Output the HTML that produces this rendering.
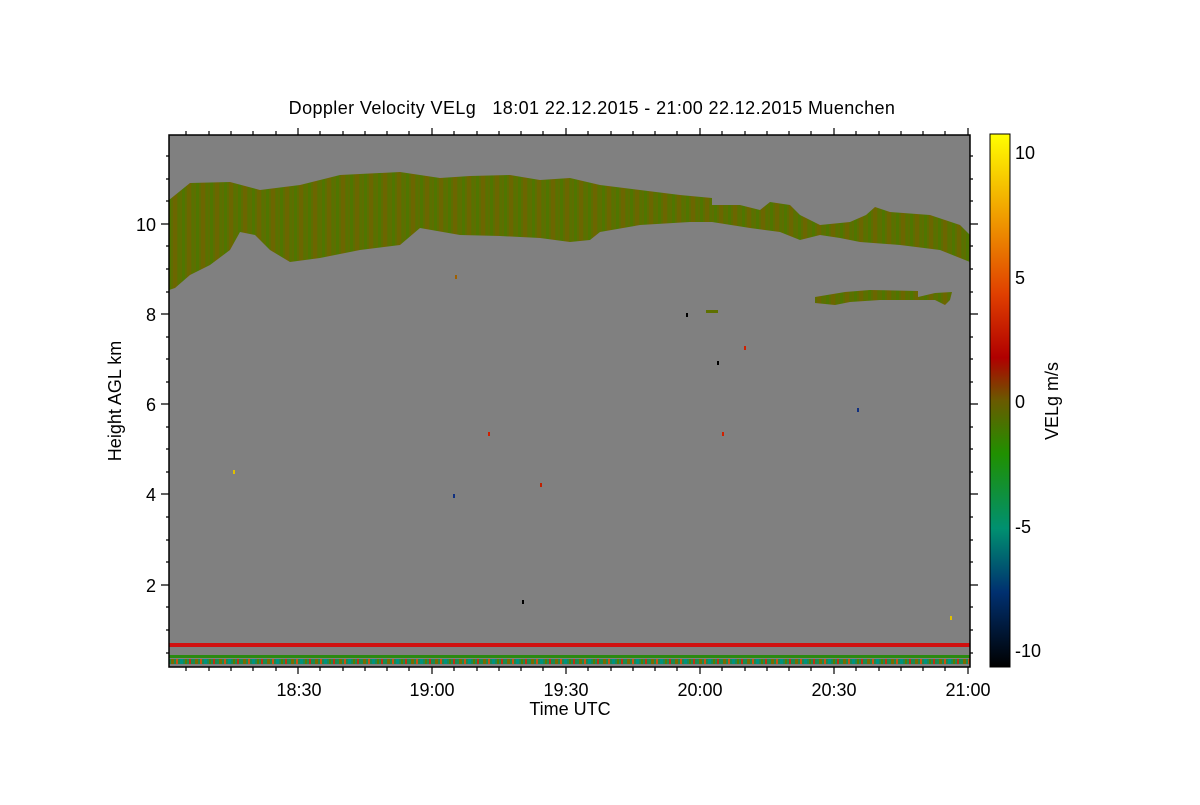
<!DOCTYPE html>
<html><head><meta charset="utf-8"><style>
body{margin:0;background:#fff;width:1200px;height:800px;overflow:hidden}
svg text{font-family:"Liberation Sans",sans-serif;fill:#000}
</style></head><body>
<svg width="1200" height="800" xmlns="http://www.w3.org/2000/svg">
<defs>
<linearGradient id="cb" x1="0" y1="0" x2="0" y2="1">
<stop offset="0" stop-color="#ffff00"/>
<stop offset="0.15" stop-color="#f0a000"/>
<stop offset="0.3" stop-color="#e04000"/>
<stop offset="0.42" stop-color="#b00000"/>
<stop offset="0.5" stop-color="#6a5a00"/>
<stop offset="0.6" stop-color="#209000"/>
<stop offset="0.74" stop-color="#009070"/>
<stop offset="0.86" stop-color="#003070"/>
<stop offset="1" stop-color="#000000"/>
</linearGradient>
<pattern id="cl" width="14" height="6" patternUnits="userSpaceOnUse">
<rect width="14" height="6" fill="#5e6e00"/>
<rect x="0" width="3" height="6" fill="#4f7600"/>
<rect x="5" width="4" height="6" fill="#6c6600"/>
<rect x="10" width="2" height="6" fill="#587200"/>
</pattern>
<pattern id="nz" width="24" height="5" patternUnits="userSpaceOnUse">
<rect width="24" height="5" fill="#1a8a50"/>
<rect x="3" width="3" height="5" fill="#7a6a00"/>
<rect x="8" width="2" height="5" fill="#c85010"/>
<rect x="12" width="3" height="5" fill="#009080"/>
<rect x="17" width="2" height="5" fill="#5a7a00"/>
<rect x="21" width="2" height="5" fill="#c03010"/>
</pattern>
</defs>
<text x="592" y="114" font-size="18" text-anchor="middle" letter-spacing="0.4" xml:space="preserve">Doppler Velocity VELg   18:01 22.12.2015 - 21:00 22.12.2015 Muenchen</text>
<rect x="169" y="135" width="801" height="532" fill="#808080"/>
<polygon fill="url(#cl)" points="169,200 190,183 230,182 260,190 300,185 340,175 400,172 440,178 470,176 510,175 540,180 570,178 600,185 640,190 680,195 712,198 712,205 740,205 760,210 770,202 790,205 800,215 820,225 850,222 866,215 875,207 890,212 930,215 960,225 970,235 970,262 940,250 900,245 860,242 840,238 820,235 800,240 780,232 750,228 712,222 690,222 640,225 600,232 590,240 570,242 540,238 500,236 460,235 420,228 400,245 360,250 320,258 290,262 270,250 255,235 240,232 230,250 210,265 190,275 175,288 169,290"/>
<polygon fill="url(#cl)" points="815,297 845,292 870,290 918,291 918,297 935,293 952,292 950,300 945,305 935,300 880,300 850,302 835,305 815,303"/>
<rect x="706" y="310" width="12" height="3" fill="#5e7000"/>
<g fill="#a06000">
<rect x="455" y="275" width="2" height="4"/><rect x="233" y="470" width="2" height="4" fill="#e0c000"/><rect x="488" y="432" width="2" height="4" fill="#d02000"/><rect x="722" y="432" width="2" height="4" fill="#d02000"/><rect x="857" y="408" width="2" height="4" fill="#103080"/><rect x="453" y="494" width="2" height="4" fill="#103080"/><rect x="522" y="600" width="2" height="4" fill="#000"/><rect x="540" y="483" width="2" height="4" fill="#c02000"/><rect x="717" y="361" width="2" height="4" fill="#000"/><rect x="686" y="313" width="2" height="4" fill="#000"/><rect x="950" y="616" width="2" height="4" fill="#e0c000"/><rect x="744" y="346" width="2" height="4" fill="#d02000"/>
</g>
<rect x="169" y="643" width="801" height="4" fill="#d01010"/>
<rect x="169" y="655" width="801" height="3" fill="#2a8a10"/>
<rect x="169" y="659" width="801" height="5" fill="url(#nz)"/>
<rect x="169" y="135" width="801" height="532" fill="none" stroke="#000" stroke-width="1.5"/>
<g stroke="#000" stroke-width="1.2">
<path d="M169,224h-8M169,314h-8M169,404h-8M169,494h-8M169,585h-8M970,224h8M970,314h8M970,404h8M970,494h8M970,585h8"/>
<path d="M169,156h-3M169,179h-3M169,201h-3M169,246h-3M169,269h-3M169,292h-3M169,337h-3M169,359h-3M169,382h-3M169,427h-3M169,449h-3M169,472h-3M169,517h-3M169,540h-3M169,562h-3M169,607h-3M169,630h-3M169,653h-3"/>
<path d="M970,156h3M970,179h3M970,201h3M970,246h3M970,269h3M970,292h3M970,337h3M970,359h3M970,382h3M970,427h3M970,449h3M970,472h3M970,517h3M970,540h3M970,562h3M970,607h3M970,630h3M970,653h3"/>
<path d="M298,135v-7M432,135v-7M566,135v-7M700,135v-7M834,135v-7M968,135v-7M298,667v7M432,667v7M566,667v7M700,667v7M834,667v7M968,667v7"/>
<path d="M186,135v-4M209,135v-4M231,135v-4M253,135v-4M276,135v-4M320,135v-4M343,135v-4M365,135v-4M387,135v-4M409,135v-4M454,135v-4M477,135v-4M499,135v-4M521,135v-4M543,135v-4M588,135v-4M611,135v-4M633,135v-4M655,135v-4M677,135v-4M722,135v-4M745,135v-4M767,135v-4M789,135v-4M811,135v-4M856,135v-4M879,135v-4M901,135v-4M923,135v-4M945,135v-4"/>
<path d="M186,667v4M209,667v4M231,667v4M253,667v4M276,667v4M320,667v4M343,667v4M365,667v4M387,667v4M409,667v4M454,667v4M477,667v4M499,667v4M521,667v4M543,667v4M588,667v4M611,667v4M633,667v4M655,667v4M677,667v4M722,667v4M745,667v4M767,667v4M789,667v4M811,667v4M856,667v4M879,667v4M901,667v4M923,667v4M945,667v4"/>
</g>
<g font-size="18" text-anchor="end">
<text x="156" y="231">10</text><text x="156" y="321">8</text><text x="156" y="411">6</text><text x="156" y="501">4</text><text x="156" y="592">2</text>
</g>
<g font-size="18" text-anchor="middle">
<text x="299" y="696">18:30</text><text x="432" y="696">19:00</text><text x="566" y="696">19:30</text><text x="700" y="696">20:00</text><text x="834" y="696">20:30</text><text x="968" y="696">21:00</text>
<text x="570" y="715">Time UTC</text>
</g>
<text transform="translate(121,401) rotate(-90)" font-size="18" text-anchor="middle">Height AGL km</text>
<rect x="990" y="134" width="20" height="533" fill="url(#cb)"/>
<rect x="990" y="134" width="20" height="533" fill="none" stroke="#000" stroke-width="1"/>
<g font-size="18">
<text x="1015" y="159">10</text><text x="1015" y="284">5</text><text x="1015" y="408">0</text><text x="1015" y="533">-5</text><text x="1015" y="657">-10</text>
</g>
<text transform="translate(1058,401) rotate(-90)" font-size="18" text-anchor="middle">VELg m/s</text>
</svg>
</body></html>
